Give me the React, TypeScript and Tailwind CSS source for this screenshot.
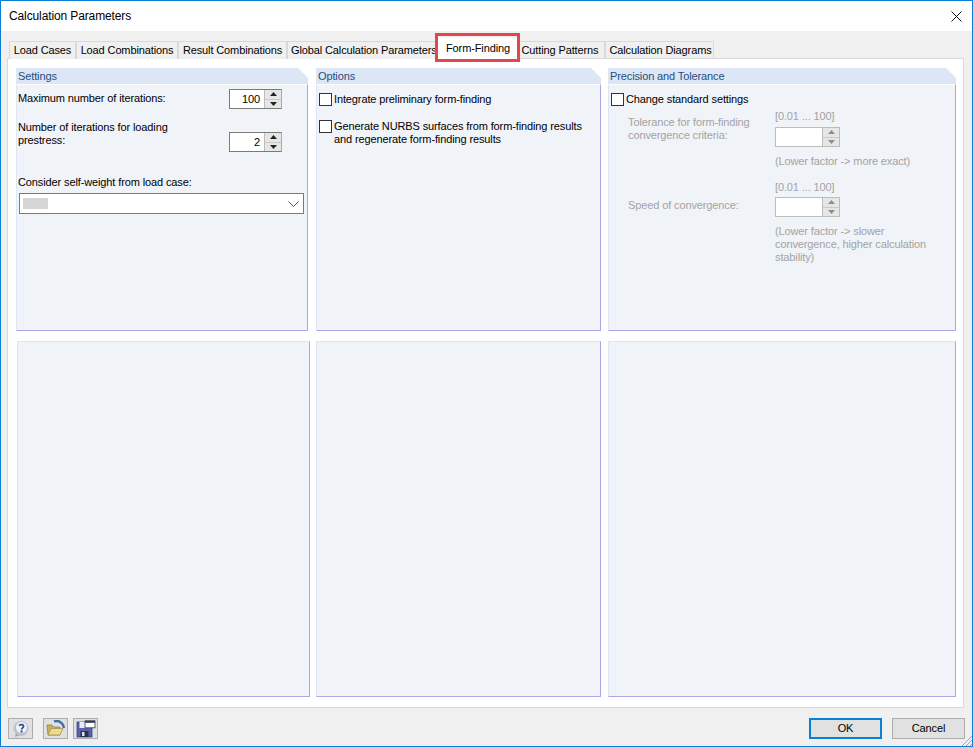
import type { ReactNode } from "react";

const tabs = [
  { label: "Load Cases", width: "w-[67px]", pad: "" },
  { label: "Load Combinations", width: "w-[102px]", pad: "" },
  { label: "Result Combinations", width: "w-[109px]", pad: "" },
  { label: "Global Calculation Parameters", width: "w-[150px]", pad: "pl-[3px]" },
];

const Panel = ({ title, children, className }: { title?: string; children?: ReactNode; className?: string }) => (
  <div className={`flex flex-col ${className ?? ""}`}>
    {title ? (
      <div className="h-[16px] shrink-0 bg-[#dce6f4] pl-[2px] leading-[16px] text-[#1f4e80] [clip-path:polygon(0_0,calc(100%-10px)_0,100%_10px,100%_100%,0_100%)]">
        {title}
      </div>
    ) : null}
    <div
      className={`flex-1 border-b border-r border-[#a9a9ea] bg-[#f0f3f8] ${
        title ? "border-l border-t border-l-[#dce6f4] border-t-white" : "border-l border-t border-l-[#dce6f4] border-t-[#dce6f4]"
      }`}
    >
      {children}
    </div>
  </div>
);

const SpinArrow = ({ up }: { up?: boolean }) => (
  <div className="flex flex-1 items-center justify-center bg-[#e6e6e6]">
    <svg width="7" height="4" viewBox="0 0 7 4" fill="currentColor">
      <path d={up ? "M3.5 0L7 4H0z" : "M0 0h7L3.5 4z"} />
    </svg>
  </div>
);

const Spinner = ({ value, disabled, width }: { value?: string; disabled?: boolean; width: string }) => (
  <div className={`flex h-[20px] ${width} border ${disabled ? "border-[#bcbcbc]" : "border-[#7a7a7a] border-r-[#a8a8a8]"} bg-white`}>
    <div className="flex-1 pr-[4px] text-right leading-[19px] text-black">{value}</div>
    <div className={`flex w-[17px] flex-col gap-[1px] border-l border-[#bcbcbc] bg-[#c9c9c9] ${disabled ? "text-[#8e8e8e]" : "text-[#222]"}`}>
      <SpinArrow up />
      <SpinArrow />
    </div>
  </div>
);

const Check = ({ label, className }: { label: ReactNode; className?: string }) => (
  <div className={`flex items-start gap-[2px] ${className ?? ""}`}>
    <div className="h-[13px] w-[13px] shrink-0 border border-[#333] bg-white" />
    <div className="mt-[-1px] whitespace-nowrap pt-[1px] leading-[13px] text-black">{label}</div>
  </div>
);

const HelpIcon = () => (
  <svg width="18" height="18" viewBox="0 0 18 18">
    <path d="M4 13 L3 17 L8 15z" fill="#9aa3ad" />
    <circle cx="9" cy="8.5" r="7.5" fill="#b9c2cd" />
    <circle cx="9.5" cy="7.5" r="5.5" fill="#eef2f7" />
    <path d="M7.2 5.8C7.6 4.2 11.6 4 11.5 6.4 11.4 7.9 9.6 7.9 9.6 9.6" fill="none" stroke="#2f4f8f" strokeWidth="1.8" />
    <rect x="8.6" y="10.5" width="2" height="2" fill="#2f4f8f" />
  </svg>
);

const FolderIcon = () => (
  <svg width="20" height="18" viewBox="0 0 20 18">
    <path d="M8 1.5C12 0 17 2 18 8" fill="none" stroke="#3f6fa8" strokeWidth="2.4" />
    <path d="M1 5h5l1.5 2H14v8H2z" fill="#c9b25f" stroke="#8b7a3a" strokeWidth=".7" />
    <path d="M2 15L5 8.5h12L14 15z" fill="#eadb95" stroke="#9c8a45" strokeWidth=".7" />
  </svg>
);

const SaveIcon = () => (
  <svg width="20" height="18" viewBox="0 0 20 18">
    <rect x="1" y="2" width="15" height="15" fill="#5b62ad" stroke="#33386f" strokeWidth=".7" />
    <rect x="3.5" y="2" width="9" height="6" fill="#e8ebf5" />
    <rect x="4.5" y="11" width="8" height="6" fill="#2e3146" />
    <rect x="6" y="12" width="2.5" height="4" fill="#dfe3ee" />
    <rect x="9" y="0.8" width="10" height="7" fill="#fff" stroke="#343a55" strokeWidth=".8" />
    <rect x="9" y="0.8" width="10" height="2" fill="#343a55" />
  </svg>
);

const ToolButton = ({ children, className }: { children: ReactNode; className?: string }) => (
  <div className={`flex h-[21px] w-[25px] items-center justify-center border border-[#adadad] bg-[#e1e1e1] ${className ?? ""}`}>
    {children}
  </div>
);

export default function App() {
  return (
    <div className="flex h-[747px] w-[973px] flex-col overflow-hidden border border-[#0a7fd8] bg-[#f0f0f0] text-[11px] tracking-[-0.12px] text-black [font-family:'Liberation_Sans',sans-serif]">
      <div className="flex h-[30px] shrink-0 items-center justify-between bg-white pl-[8px] pr-[10px] text-[12px]">
        <span>Calculation Parameters</span>
        <svg width="11" height="11" viewBox="0 0 11 11" stroke="#111" strokeWidth="1" fill="none">
          <path d="M.5.5l10 10M10.5.5l-10 10" />
        </svg>
      </div>

      <div className="relative flex h-[27px] shrink-0 items-end pl-[8px]">
        {tabs.map((tab) => (
          <div
            key={tab.label}
            className={`h-[18px] ${tab.width} ${tab.pad} -mb-px shrink-0 whitespace-nowrap border border-b-0 border-[#d9d9d9] bg-[#f0f0f0] text-center leading-[17px]`}
          >
            {tab.label}
          </div>
        ))}
        <div className="relative z-10 -mb-px ml-[1px] h-[21px] w-[80px] shrink-0 whitespace-nowrap bg-white text-center leading-[20px]">
          Form-Finding
        </div>
        <div className="-mb-px ml-[1px] h-[18px] w-[86px] shrink-0 whitespace-nowrap border border-b-0 border-[#d9d9d9] pr-[4px] text-center leading-[17px]">
          Cutting Patterns
        </div>
        <div className="-mb-px h-[18px] w-[109px] shrink-0 whitespace-nowrap border border-b-0 border-[#d9d9d9] pl-[2px] text-center leading-[17px]">
          Calculation Diagrams
        </div>
        <div className="absolute left-[434px] top-[2px] z-20 h-[29px] w-[85px] border-[3px] border-[#e2474b]" />
      </div>

      <div className="ml-[6px] mr-[8px] flex h-[650px] shrink-0 flex-col gap-[10px] border border-[#d9d9d9] bg-white px-[8px] pb-[10px] pt-[9px]">
        <div className="grid h-[263px] grid-cols-[293px_285px_348px] gap-x-[7px]">
          <Panel title="Settings" className="mr-[1px]">
            <div className="px-[1px]">
              <div className="mt-[4px] flex h-[20px] items-center justify-between pr-[24px]">
                <span className="-mt-[1px]">Maximum number of iterations:</span>
                <Spinner value="100" width="w-[53px]" />
              </div>
              <div className="mt-[12px] flex items-start justify-between pr-[24px]">
                <span className="w-[170px] leading-[13px]">Number of iterations for loading prestress:</span>
                <div className="mt-[11px]">
                  <Spinner value="2" width="w-[53px]" />
                </div>
              </div>
              <div className="mt-[24px] leading-[13px]">Consider self-weight from load case:</div>
              <div className="ml-[1px] mt-[4px] flex h-[21px] w-[285px] items-center justify-between border border-[#7a7a7a] bg-white pl-[3px] pr-[4px]">
                <div className="h-[11px] w-[25px] bg-[#d5d5d5]" />
                <svg width="11" height="6" viewBox="0 0 11 6" fill="none" stroke="#555">
                  <path d="M.5.5l5 5 5-5" />
                </svg>
              </div>
            </div>
          </Panel>
          <Panel title="Options">
            <div className="px-[2px] pt-[8px]">
              <Check label="Integrate preliminary form-finding" />
              <Check
                className="mt-[14px]"
                label={
                  <>
                    Generate NURBS surfaces from form-finding results
                    <br />
                    and regenerate form-finding results
                  </>
                }
              />
            </div>
          </Panel>
          <Panel title="Precision and Tolerance">
            <div className="px-[2px] pt-[8px]">
              <Check label="Change standard settings" />
              <div className="mt-[4px] grid grid-cols-[164px_1fr] leading-[13px] text-[#a3a3a3]">
                <div className="pl-[17px] pt-[6px]">
                  <span className="block w-[130px]">Tolerance for form-finding convergence criteria:</span>
                </div>
                <div>
                  <div>[0.01 ... 100]</div>
                  <div className="mt-[4px]">
                    <Spinner disabled width="w-[65px]" />
                  </div>
                  <div className="mt-[8px]">(Lower factor -&gt; more exact)</div>
                </div>
                <div className="flex items-center pb-[24px] pl-[17px] pt-[2px]">Speed of convergence:</div>
                <div className="mt-[13px]">
                  <div>[0.01 ... 100]</div>
                  <div className="mt-[3px]">
                    <Spinner disabled width="w-[65px]" />
                  </div>
                  <div className="mt-[8px] w-[160px]">(Lower factor -&gt; slower convergence, higher calculation stability)</div>
                </div>
              </div>
            </div>
          </Panel>
        </div>
        <div className="grid flex-1 grid-cols-[294px_286px_348px] gap-x-[6px]">
          <Panel className="ml-[1px]" />
          <Panel className="mr-[1px]" />
          <Panel />
        </div>
      </div>

      <div className="relative flex flex-1 items-start justify-between pl-[7px] pr-[7px] pt-[10px]">
        <div className="flex">
          <ToolButton><HelpIcon /></ToolButton>
          <ToolButton className="ml-[10px]"><FolderIcon /></ToolButton>
          <ToolButton className="ml-[5px]"><SaveIcon /></ToolButton>
        </div>
        <div className="flex gap-[10px]">
          <div className="flex h-[21px] w-[73px] items-center justify-center border-2 border-[#0a7fd8] bg-[#e1e1e1]">OK</div>
          <div className="flex h-[21px] w-[73px] items-center justify-center border border-[#adadad] bg-[#e1e1e1]">Cancel</div>
        </div>
        <svg className="absolute bottom-0 right-0" width="11" height="11" viewBox="0 0 11 11" stroke="#a8a8a8" fill="none">
          <path d="M11 1L1 11M11 5L5 11M11 9L9 11" />
        </svg>
      </div>
    </div>
  );
}
